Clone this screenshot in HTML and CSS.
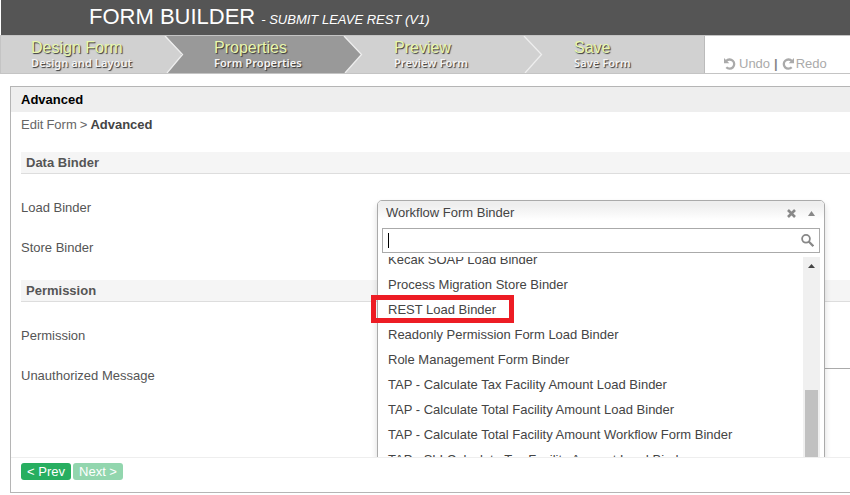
FILE: index.html
```html
<!DOCTYPE html>
<html lang="en">
<head>
<meta charset="utf-8">
<title>Form Builder</title>
<link rel="stylesheet" href="styles.css">
</head>
<body>
<header class="header"><h1><span class="brand">FORM BUILDER</span> <em>- SUBMIT LEAVE REST (V1)</em></h1></header>
<nav class="steps">
  <a class="step"><span class="step-title">Design Form</span><span class="step-sub">Design and Layout</span>
    <svg class="arrow" width="26" height="37" viewBox="0 0 26 37"><path d="M5 0H26V37H6L21.500 18.500Z" fill="#999"/><path d="M4 0L21.500 18.500L6 37" fill="none" stroke="#eee" stroke-width="1.300"/></svg></a>
  <a class="step current"><span class="step-title">Properties</span><span class="step-sub">Form Properties</span>
    <svg class="arrow" width="26" height="37" viewBox="0 0 26 37"><path d="M3 0H26V37H4L20.500 18.500Z" fill="#d1d1d1"/><path d="M3 0L20.500 18.500L4 37" fill="none" stroke="#eee" stroke-width="1.300"/></svg></a>
  <a class="step"><span class="step-title">Preview</span><span class="step-sub">Preview Form</span>
    <svg class="arrow" width="26" height="37" viewBox="0 0 26 37"><path d="M3 0L20.500 18.500L4 37" fill="none" stroke="#eee" stroke-width="1.300"/></svg></a>
  <a class="step last"><span class="step-title">Save</span><span class="step-sub">Save Form</span></a>
  <div class="history">
    <svg width="12" height="12" viewBox="0 0 12 12"><path d="M2.200 3A4.600 4.600 0 1 1 2.300 9.300" fill="none" stroke="#aaa" stroke-width="2.300"/><path d="M0 0V5.300H5.300Z" fill="#aaa"/></svg><span>Undo</span><b>|</b><svg width="12" height="12" viewBox="0 0 12 12"><path d="M9.800 3A4.600 4.600 0 1 0 9.700 9.300" fill="none" stroke="#aaa" stroke-width="2.300"/><path d="M12 0V5.300H6.700Z" fill="#aaa"/></svg><span>Redo</span>
  </div>
</nav>
<main class="panel">
  <h2>Advanced</h2>
  <div class="content">
    <p class="crumbs"><span>Edit Form</span> &gt; <b>Advanced</b></p>
    <h3 class="sec-data">Data Binder</h3>
    <div class="field"><label>Load Binder</label>
      <div class="select">
        <div class="chosen"><span>Workflow Form Binder</span>
          <svg class="clear" width="9" height="9" viewBox="0 0 9 9"><path d="M1 1L8 8M8 1L1 8" stroke="#888" stroke-width="2.600"/></svg>
          <svg width="7" height="5" viewBox="0 0 7 5"><path d="M0 5L3.500 0L7 5Z" fill="#888"/></svg></div>
        <div class="search"><i></i><svg width="13" height="13" viewBox="0 0 13 13"><circle cx="5" cy="4.800" r="3.900" fill="none" stroke="#888" stroke-width="1.800"/><path d="M7.700 7.500L12.300 12.100" stroke="#888" stroke-width="2.200"/></svg></div>
        <div class="results">
          <ul>
            <li>Kecak SOAP Load Binder</li>
            <li>Process Migration Store Binder</li>
            <li class="marked">REST Load Binder</li>
            <li>Readonly Permission Form Load Binder</li>
            <li>Role Management Form Binder</li>
            <li>TAP - Calculate Tax Facility Amount Load Binder</li>
            <li>TAP - Calculate Total Facility Amount Load Binder</li>
            <li>TAP - Calculate Total Facility Amount Workflow Form Binder</li>
            <li>TAP - SLI Calculate Tax Facility Amount Load Binder</li>
          </ul>
          <div class="track"><svg width="7" height="4" viewBox="0 0 7 4"><path d="M0 4L3.500 0L7 4Z" fill="#444"/></svg><div class="thumb"></div></div>
        </div>
      </div>
    </div>
    <div class="field"><label>Store Binder</label></div>
    <h3 class="sec-permission">Permission</h3>
    <div class="field"><label>Permission</label></div>
    <div class="field"><label>Unauthorized Message</label><div class="textarea"></div></div>
  </div>
  <footer><button>&lt; Prev</button><button class="next">Next &gt;</button></footer>
</main>
</body>
</html>
```
FILE: styles.css
```css
*, *::before { box-sizing: border-box; }
body { margin: 0; width: 850px; height: 495px; overflow: hidden; background: #fff; color: #444; font: 13px/20px "Liberation Sans", Arial, sans-serif; }
h1, h2, h3, p, ul { margin: 0; padding: 0; font-weight: normal; }
.header { height: 35px; margin-left: 1px; padding-left: 88px; background: #555; color: #fff; }
h1 { display: flex; align-items: baseline; gap: 6px; font-size: 22px; line-height: 33px; white-space: nowrap; }
h1 em { font-size: 13px; }
.steps { display: flex; height: 39px; border: solid #c4c4c4; border-width: 1px 0 1px 1px; }
.step { position: relative; width: 180px; padding: 3px 0 0 33px; background: #d1d1d1; display: flex; flex-direction: column; white-space: nowrap; }
.step:first-child { padding-left: 30px; }
.current { background: #999; }
.step.last { width: 164px; border-right: 1px solid #bbb; }
.step-title { align-self: flex-start; font-size: 16px; line-height: 17px; color: #e9f7ad; text-shadow: 1px 1px 1px #333; }
.step-sub { align-self: flex-start; font: 600 11px/14px "Noto Sans", sans-serif; letter-spacing: .08px; color: #f5f5f5; text-shadow: 1px 1px 1px #333; }
.arrow { position: absolute; left: 160px; top: 0; z-index: 1; }
.history { display: flex; align-items: center; height: 20px; margin: 18px 0 0 19px; color: #aaa; white-space: nowrap; }
.history span { margin-left: 3px; }
.history b { margin: 0 4px; color: #888; }
.history svg + span:last-child { margin-left: 2px; }
.panel { height: 407px; margin: 12px 0 0 10px; border: solid #b5b5b5; border-width: 1px 0 1px 1px; }
h2 { height: 25px; padding-left: 10px; background: #eee; color: #000; font-size: 13px; line-height: 25px; font-weight: bold; }
.content { height: 345px; padding: 3px 0 0 10px; overflow: hidden; }
.crumbs { height: 37px; color: #666; word-spacing: -.6px; }
.crumbs b { color: #444; }
h3 { height: 22px; padding-left: 5px; background: #f5f5f5; border-bottom: 1px solid #ddd; color: #555; font-size: 13px; line-height: 21px; font-weight: bold; }
.sec-data { margin-bottom: 23px; }
.sec-permission { margin: 3px 0 23px; }
.field { position: relative; height: 40px; color: #555; }
label { display: block; padding-top: 1px; }
.select { position: absolute; z-index: 2; left: 356px; top: 3px; width: 448px; height: 270px; border: 1px solid #aaa; border-radius: 5px 5px 0 0; background: #fff; box-shadow: 0 4px 6px rgba(0,0,0,.15); color: #444; }
.chosen { display: flex; align-items: center; height: 24px; padding: 0 9px 0 8px; border-radius: 4px 4px 0 0; background: linear-gradient(#eee 15%, #fff 80%); }
.chosen span { margin-right: auto; }
.clear { margin-right: 12px; }
.search { display: flex; align-items: flex-start; justify-content: space-between; height: 25px; margin: 3px 4px 4px; padding: 4px 5px; border: 1px solid #aaa; }
.search i { width: 1px; height: 15px; background: #000; }
.search svg { margin-top: 1px; }
.results { display: flex; height: 210px; margin: 0 4px; }
ul { flex: 1; height: 100%; overflow: hidden; list-style: none; }
li { height: 25px; padding-left: 6px; line-height: 25px; white-space: nowrap; }
li:first-child { margin-top: -10px; }
.marked::before { content: ""; position: absolute; left: -7px; top: 94px; width: 143px; height: 28px; border: 5px solid #ed1c24; }
.track { width: 17px; height: 100%; padding-top: 7px; background: #f0f0f0; display: flex; flex-direction: column; align-items: center; }
.track svg { flex: none; }
.thumb { flex: none; width: 13px; height: 90px; margin-top: 122px; background: #c1c1c1; }
.textarea { position: absolute; left: 356px; right: 0; top: 3px; height: 100px; border-top: 1px solid #aaa; }
footer { height: 35px; padding: 5px 10px; border-top: 1px solid #eee; display: flex; gap: 2px; }
button { width: 50px; height: 17px; padding: 0; border: 0; border-radius: 3px; background: #27ae60; color: #fff; font: 13px/17px "Liberation Sans", Arial, sans-serif; }
.next { opacity: .5; }
```
